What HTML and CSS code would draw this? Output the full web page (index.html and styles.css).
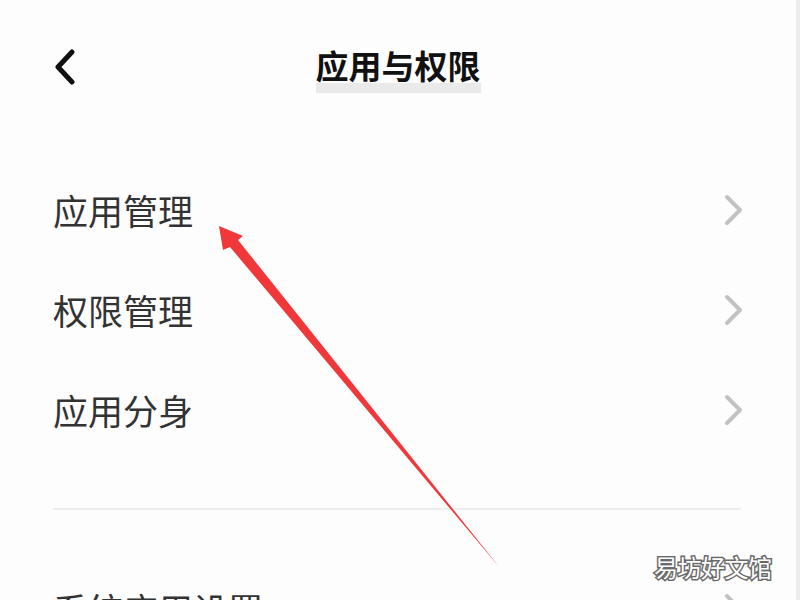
FILE: index.html
```html
<!DOCTYPE html>
<html lang="zh-CN">
<head>
<meta charset="utf-8">
<link rel="stylesheet" href="styles.css">
</head>
<body>
<div class="screen">
  <div class="header">
    <div class="back">
      <svg width="24" height="36" viewBox="0 0 24 36"><polyline points="19,3 5,18 19,33" fill="none" stroke="#111" stroke-width="5" stroke-linecap="round" stroke-linejoin="round"/></svg>
    </div>
    <div class="title">应用与权限</div>
    <div class="spacer"></div>
  </div>
  <div class="list">
    <div class="row"><span class="label">应用管理</span><svg class="chev" width="20" height="32" viewBox="0 0 20 32"><polyline points="3,3 16,16 3,29" fill="none" stroke="#c2c2c2" stroke-width="4" stroke-linecap="round" stroke-linejoin="round"/></svg></div>
    <div class="row"><span class="label">权限管理</span><svg class="chev" width="20" height="32" viewBox="0 0 20 32"><polyline points="3,3 16,16 3,29" fill="none" stroke="#c2c2c2" stroke-width="4" stroke-linecap="round" stroke-linejoin="round"/></svg></div>
    <div class="row"><span class="label">应用分身</span><svg class="chev" width="20" height="32" viewBox="0 0 20 32"><polyline points="3,3 16,16 3,29" fill="none" stroke="#c2c2c2" stroke-width="4" stroke-linecap="round" stroke-linejoin="round"/></svg></div>
    <div class="divider"></div>
    <div class="row"><span class="label">系统应用设置</span><svg class="chev" width="20" height="32" viewBox="0 0 20 32"><polyline points="3,3 16,16 3,29" fill="none" stroke="#c2c2c2" stroke-width="4" stroke-linecap="round" stroke-linejoin="round"/></svg></div>
  </div>
  <svg class="arrow" width="800" height="600" viewBox="0 0 800 600">
    <polygon points="219,226 243,236 238,240 500,568 230,247 223,250" fill="#f0383a"/>
  </svg>
  <div class="watermark">易坊好文馆</div>
</div>
</body>
</html>
```

FILE: styles.css
```css
html, body {
  margin: 0;
  padding: 0;
  background: #fdfdfd;
}
.screen {
  position: relative;
  width: 796px;
  height: 600px;
  border-right: 4px solid #ececec;
  overflow: hidden;
  background: #fdfdfd;
  font-family: "Noto Sans CJK SC", "Noto Sans", sans-serif;
}
.header {
  height: 136px;
  display: grid;
  grid-template-columns: 1fr auto 1fr;
  align-items: center;
  padding-left: 53px;
  padding-right: 53px;
}
.back {
  display: flex;
  align-items: center;
  margin-top: -2px;
}
.title {
  font-size: 33px;
  font-weight: 700;
  color: #111;
  line-height: 40px;
  padding-top: 2px;
  padding-bottom: 8px;
  background: linear-gradient(to bottom, transparent 0, transparent 40px, #eaeaea 40px, #eaeaea 50px);
}
.list {
  margin-top: 24px;
  padding-left: 53px;
  padding-right: 52px;
}
.row {
  height: 100px;
  display: flex;
  align-items: center;
  justify-content: space-between;
}
.label {
  font-size: 35px;
  color: #333;
  line-height: 40px;
}
.chev {
  display: block;
}
.divider {
  height: 2px;
  background: #eeeeee;
  margin: 48px 3px 49px 0;
}
.arrow {
  position: absolute;
  left: 0;
  top: 0;
}
.watermark {
  position: absolute;
  left: 654px;
  top: 550px;
  font-size: 24px;
  line-height: 34px;
  color: #fff;
  -webkit-text-stroke: 3px #6a6a6a;
  paint-order: stroke fill;
  letter-spacing: -0.5px;
}
```
